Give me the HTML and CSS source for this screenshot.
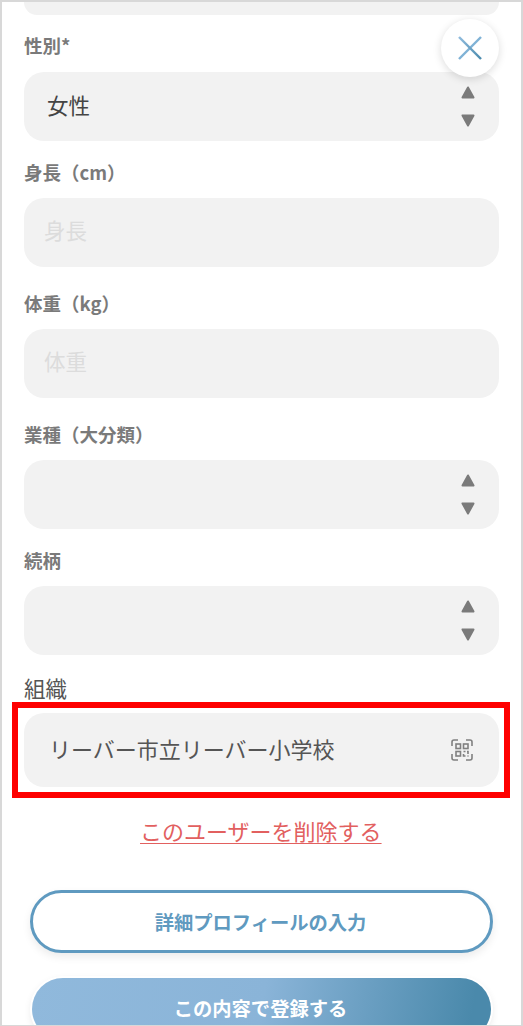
FILE: index.html
```html
<!DOCTYPE html>
<html lang="ja">
<head>
    <meta charset="UTF-8">
    <title>ユーザー編集</title>
    <link rel="stylesheet" href="styles.css">
</head>
<body>
<main class="screen">
    <div class="field field-cut"></div>

    <p class="label label-gender">性別*</p>
    <div class="field select">
        <span class="value">女性</span>
        <svg class="arrows" width="14" height="42" viewBox="0 0 14 42"><path d="M7 1.5 L12.5 11.5 H1.5 Z M1.5 29.5 H12.5 L7 39.5 Z" fill="#7b7b7b" stroke="#7b7b7b" stroke-width="2" stroke-linejoin="round"/></svg>
    </div>

    <p class="label label-height">身長（cm）</p>
    <div class="field"><span class="placeholder">身長</span></div>

    <p class="label label-weight">体重（kg）</p>
    <div class="field"><span class="placeholder">体重</span></div>

    <p class="label label-industry">業種（大分類）</p>
    <div class="field select">
        <svg class="arrows" width="14" height="42" viewBox="0 0 14 42"><path d="M7 1.5 L12.5 11.5 H1.5 Z M1.5 29.5 H12.5 L7 39.5 Z" fill="#7b7b7b" stroke="#7b7b7b" stroke-width="2" stroke-linejoin="round"/></svg>
    </div>

    <p class="label label-relation">続柄</p>
    <div class="field select">
        <svg class="arrows" width="14" height="42" viewBox="0 0 14 42"><path d="M7 1.5 L12.5 11.5 H1.5 Z M1.5 29.5 H12.5 L7 39.5 Z" fill="#7b7b7b" stroke="#7b7b7b" stroke-width="2" stroke-linejoin="round"/></svg>
    </div>

    <p class="label-org">組織</p>
    <div class="field field-org">
        <span class="org-name">リーバー市立リーバー小学校</span>
        <svg class="qr" width="22" height="22" viewBox="0 0 22 22" fill="none" stroke="#808080" stroke-width="1.6">
            <path d="M1 7 V3 Q1 1 3 1 H7 M15 1 H19 Q21 1 21 3 V7 M21 15 V19 Q21 21 19 21 H15 M7 21 H3 Q1 21 1 19 V15"/>
            <rect x="5" y="5" width="4.5" height="4.5"/>
            <rect x="12.5" y="5" width="4.5" height="4.5"/>
            <rect x="5" y="12.5" width="4.5" height="4.5"/>
            <path d="M12.5 12.5 H14.5 M16 12.5 H17 V15 M12.5 15 V17 H14.5 M17 16.5 V17.5"/>
        </svg>
    </div>

    <a class="delete-link" href="#">このユーザーを削除する</a>

    <button class="btn btn-outline">詳細プロフィールの入力</button>
    <button class="btn btn-submit">この内容で登録する</button>

    <div class="highlight"></div>
    <button class="close-btn">
        <svg width="26" height="26" viewBox="0 0 26 26"><defs><linearGradient id="closeGrad" x1="0" y1="0" x2="1" y2="1"><stop offset="0" stop-color="#8fbbdd"/><stop offset="1" stop-color="#4a8aad"/></linearGradient></defs><path d="M24 2 L2 24" stroke="#7fb2d6" stroke-width="2.4" fill="none"/><path d="M2 2 L24 24.01" stroke="url(#closeGrad)" stroke-width="2.4" fill="none"/></svg>
    </button>
</main>
</body>
</html>
```

FILE: styles.css
```css
* {
    box-sizing: border-box;
}
html, body {
    margin: 0;
    padding: 0;
    height: 1026px;
    overflow: hidden;
    background-color: #fff;
}
body {
    font-family: "Noto Sans CJK JP", "Noto Sans", sans-serif;
}
.screen {
    position: relative;
    height: 1026px;
    padding: 0 22px;
    border: 2px solid #d8d8d8;
    border-bottom-width: 1px;
    overflow: hidden;
}
.field {
    display: flex;
    align-items: center;
    width: 475px;
    height: 69px;
    background-color: #f2f2f2;
    border-radius: 20px;
}
.field-cut {
    height: 13px;
    border-radius: 0 0 18px 18px;
}
.label {
    margin: 0 0 14px;
    height: 24px;
    line-height: 24px;
    font-size: 18.5px;
    font-weight: 700;
    color: #7a7a7a;
}
.label-gender {
    margin-top: 18px;
    margin-bottom: 15px;
}
.label-height {
    margin-top: 19px;
}
.label-weight {
    margin-top: 24px;
}
.label-industry {
    margin-top: 24px;
}
.label-relation {
    margin-top: 19px;
}
.label-org {
    margin: 21px 0 13px;
    height: 24px;
    line-height: 24px;
    font-size: 21.5px;
    color: #555;
}
.select {
    position: relative;
}
.value {
    margin-left: 23px;
    padding-bottom: 4px;
    font-size: 21.5px;
    color: #444;
}
.placeholder {
    margin-left: 20px;
    padding-bottom: 6px;
    font-size: 21.5px;
    color: #dcdcdc;
}
.arrows {
    position: absolute;
    right: 24px;
    top: 14px;
}
.field-org {
    justify-content: space-between;
    height: 74px;
    padding: 0 26px 0 25px;
}
.org-name {
    padding-bottom: 4px;
    font-size: 22px;
    color: #555;
}
.delete-link {
    display: block;
    width: fit-content;
    margin: 28px 0 0 116px;
    height: 32px;
    line-height: 30px;
    font-size: 22px;
    color: #e2605f;
    text-decoration: underline;
    text-underline-offset: 3px;
    text-decoration-thickness: 1px;
}
.btn {
    display: block;
    font-family: inherit;
    font-size: 19.3px;
    font-weight: 700;
    border-radius: 32px;
}
.btn-outline {
    width: 463px;
    height: 63px;
    margin: 43px 0 0 6px;
    padding-right: 8px;
    background-color: #fff;
    border: 3px solid #5f9ac0;
    color: #5f9ac0;
    box-shadow: 0 4px 8px rgba(0, 0, 0, 0.08);
}
.btn-submit {
    width: 459px;
    height: 62px;
    margin: 25px 0 0 8px;
    border: none;
    padding: 0 2px 2px 0;
    color: #fff;
    background: linear-gradient(100deg, #90b9dc 0%, #8ab4d8 50%, #4a89ab 95%);
    box-shadow: 0 0 0 2px #fff, 0 3px 8px rgba(0, 0, 0, 0.12);
}
.highlight {
    position: absolute;
    left: 10px;
    top: 700px;
    width: 498px;
    height: 96px;
    border: 6px solid #fe0000;
    pointer-events: none;
}
.close-btn {
    position: absolute;
    left: 439px;
    top: 17px;
    display: flex;
    align-items: center;
    justify-content: center;
    width: 58px;
    height: 58px;
    padding: 0;
    border: none;
    border-radius: 50%;
    background-color: #fff;
    box-shadow: 0 2px 8px rgba(0, 0, 0, 0.14);
}
```
